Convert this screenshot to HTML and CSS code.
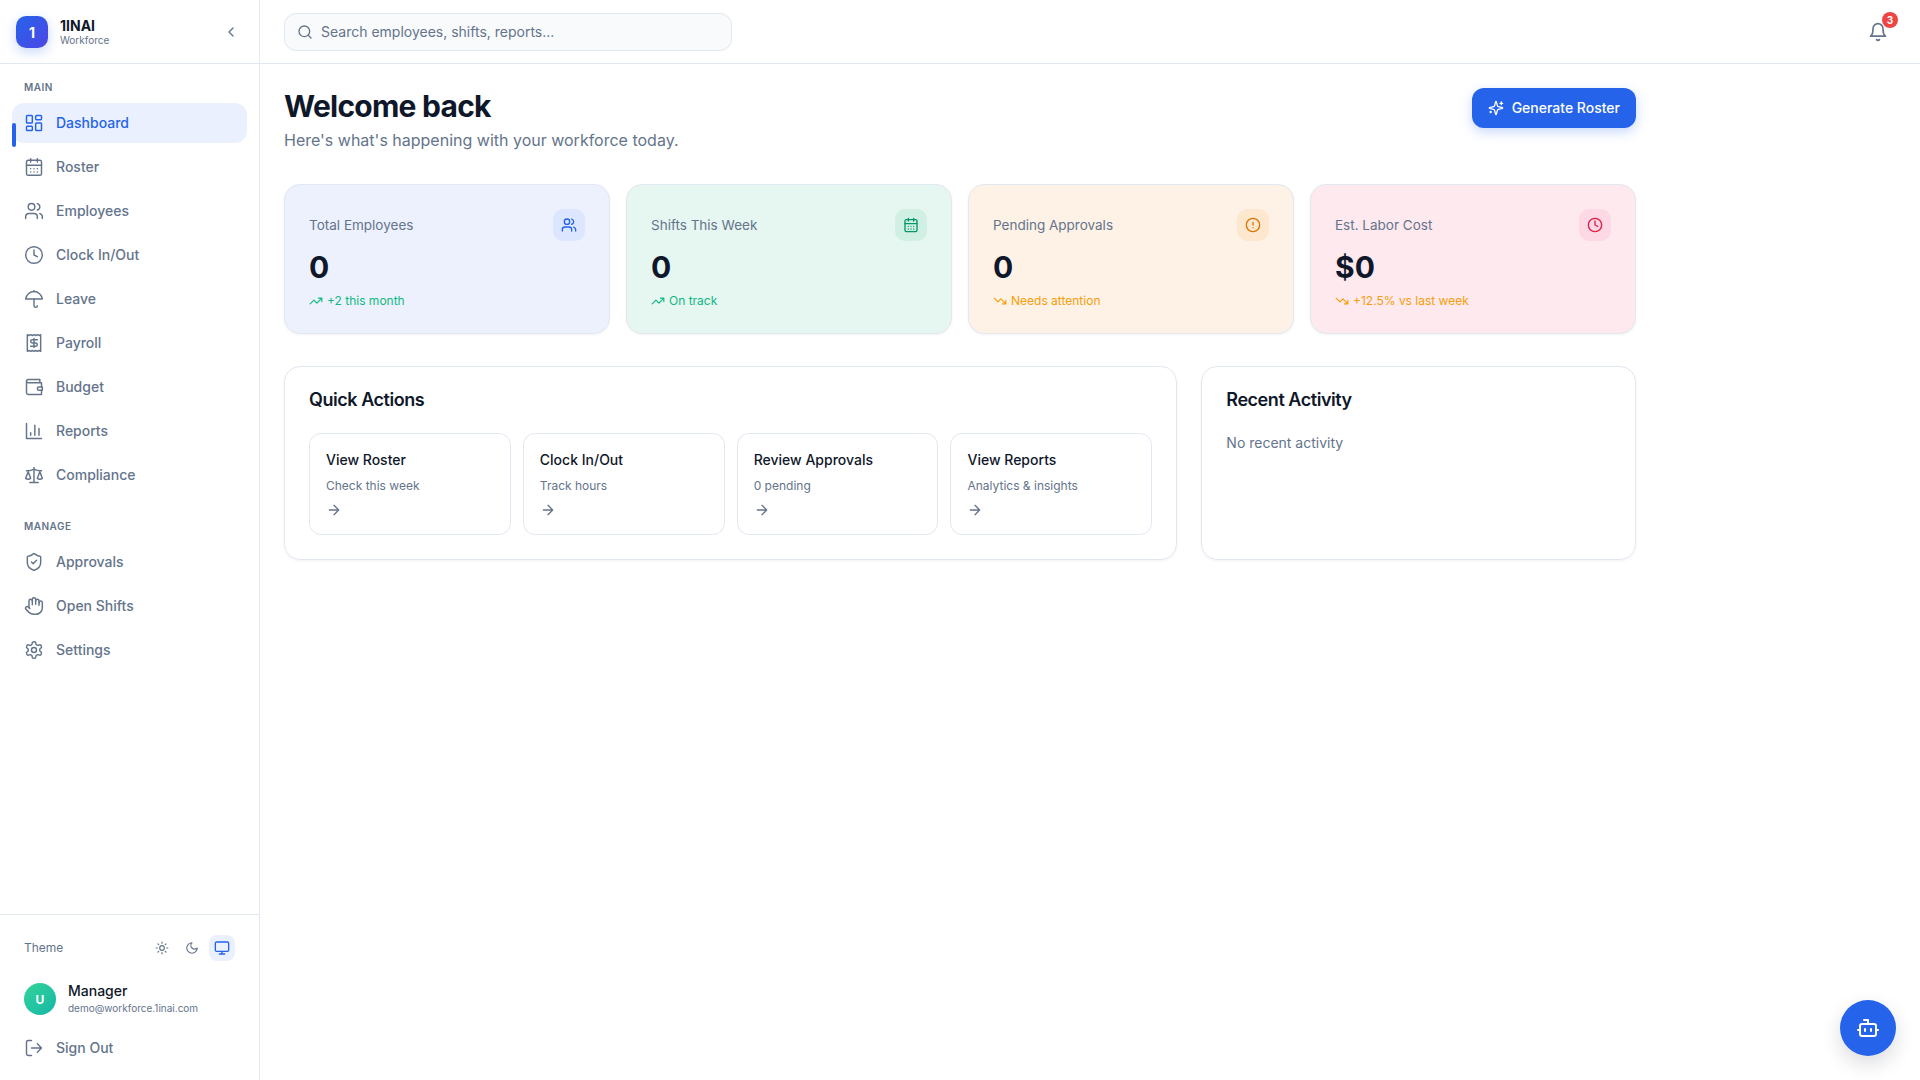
FILE: index.html
```html
<!DOCTYPE html>
<html lang="en">

<head>
    <meta charset="UTF-8">
    <meta name="viewport" content="width=device-width, initial-scale=1.0">
    <title>1INAI Workforce</title>
    <link rel="stylesheet" href="styles.css">
</head>

<body>
    <svg class="icon-sprite" xmlns="http://www.w3.org/2000/svg">
        <symbol id="i-dashboard" viewBox="0 0 24 24"><rect x="3" y="3" width="7" height="9" rx="1"/><rect x="14" y="3" width="7" height="5" rx="1"/><rect x="14" y="12" width="7" height="9" rx="1"/><rect x="3" y="16" width="7" height="5" rx="1"/></symbol>
        <symbol id="i-calendar" viewBox="0 0 24 24"><path d="M8 2v4M16 2v4"/><rect x="3" y="4" width="18" height="18" rx="2"/><path d="M3 10h18M8 14h.01M12 14h.01M16 14h.01M8 18h.01M12 18h.01M16 18h.01"/></symbol>
        <symbol id="i-users" viewBox="0 0 24 24"><path d="M16 21v-2a4 4 0 0 0-4-4H6a4 4 0 0 0-4 4v2"/><circle cx="9" cy="7" r="4"/><path d="M22 21v-2a4 4 0 0 0-3-3.87M16 3.13a4 4 0 0 1 0 7.75"/></symbol>
        <symbol id="i-clock" viewBox="0 0 24 24"><circle cx="12" cy="12" r="10"/><path d="M12 6v6l4 2"/></symbol>
        <symbol id="i-umbrella" viewBox="0 0 24 24"><path d="M22 12a10.06 10.06 1 0 0-20 0Z"/><path d="M12 12v8a2 2 0 0 0 4 0M12 2v1"/></symbol>
        <symbol id="i-receipt" viewBox="0 0 24 24"><path d="M4 2v20l2-1 2 1 2-1 2 1 2-1 2 1 2-1 2 1V2l-2 1-2-1-2 1-2-1-2 1-2-1-2 1Z"/><path d="M16 8h-6a2 2 0 1 0 0 4h4a2 2 0 1 1 0 4H8M12 17.5v-11"/></symbol>
        <symbol id="i-wallet" viewBox="0 0 24 24"><path d="M21 12V7H5a2 2 0 0 1 0-4h14v4"/><path d="M3 5v14a2 2 0 0 0 2 2h16v-5"/><path d="M18 12a2 2 0 0 0 0 4h4v-4Z"/></symbol>
        <symbol id="i-chart" viewBox="0 0 24 24"><path d="M3 3v18h18M18 17V9M13 17V5M8 17v-3"/></symbol>
        <symbol id="i-scale" viewBox="0 0 24 24"><path d="m16 16 3-8 3 8c-.87.65-1.92 1-3 1s-2.13-.35-3-1Z"/><path d="m2 16 3-8 3 8c-.87.65-1.92 1-3 1s-2.13-.35-3-1Z"/><path d="M7 21h10M12 3v18M3 7h2c2 0 5-1 7-2 2 1 5 2 7 2h2"/></symbol>
        <symbol id="i-shield" viewBox="0 0 24 24"><path d="M20 13c0 5-3.5 7.5-7.66 8.95a1 1 0 0 1-.67-.01C7.5 20.5 4 18 4 13V6a1 1 0 0 1 1-1c2 0 4.5-1.2 6.24-2.72a1.17 1.17 0 0 1 1.52 0C14.51 3.81 17 5 19 5a1 1 0 0 1 1 1z"/><path d="m9 12 2 2 4-4"/></symbol>
        <symbol id="i-hand" viewBox="0 0 24 24"><path d="M18 11V6a2 2 0 0 0-2-2a2 2 0 0 0-2 2"/><path d="M14 10V4a2 2 0 0 0-2-2a2 2 0 0 0-2 2v2"/><path d="M10 10.5V6a2 2 0 0 0-2-2a2 2 0 0 0-2 2v8"/><path d="M18 8a2 2 0 1 1 4 0v6a8 8 0 0 1-8 8h-2c-2.8 0-4.5-.86-5.99-2.34l-3.6-3.6a2 2 0 0 1 2.83-2.82L7 15"/></symbol>
        <symbol id="i-settings" viewBox="0 0 24 24"><path d="M12.22 2h-.44a2 2 0 0 0-2 2v.18a2 2 0 0 1-1 1.73l-.43.25a2 2 0 0 1-2 0l-.15-.08a2 2 0 0 0-2.73.73l-.22.38a2 2 0 0 0 .73 2.73l.15.1a2 2 0 0 1 1 1.72v.51a2 2 0 0 1-1 1.74l-.15.09a2 2 0 0 0-.73 2.73l.22.38a2 2 0 0 0 2.73.73l.15-.08a2 2 0 0 1 2 0l.43.25a2 2 0 0 1 1 1.73V20a2 2 0 0 0 2 2h.44a2 2 0 0 0 2-2v-.18a2 2 0 0 1 1-1.73l.43-.25a2 2 0 0 1 2 0l.15.08a2 2 0 0 0 2.73-.73l.22-.39a2 2 0 0 0-.73-2.73l-.15-.08a2 2 0 0 1-1-1.74v-.5a2 2 0 0 1 1-1.74l.15-.09a2 2 0 0 0 .73-2.73l-.22-.38a2 2 0 0 0-2.73-.73l-.15.08a2 2 0 0 1-2 0l-.43-.25a2 2 0 0 1-1-1.73V4a2 2 0 0 0-2-2z"/><circle cx="12" cy="12" r="3"/></symbol>
        <symbol id="i-logout" viewBox="0 0 24 24"><path d="M9 21H5a2 2 0 0 1-2-2V5a2 2 0 0 1 2-2h4M16 17l5-5-5-5M21 12H9"/></symbol>
        <symbol id="i-sun" viewBox="0 0 24 24"><circle cx="12" cy="12" r="4"/><path d="M12 2v2M12 20v2M4.93 4.93l1.41 1.41M17.66 17.66l1.41 1.41M2 12h2M20 12h2M6.34 17.66l-1.41 1.41M19.07 4.93l-1.41 1.41"/></symbol>
        <symbol id="i-moon" viewBox="0 0 24 24"><path d="M12 3a6 6 0 0 0 9 9 9 9 0 1 1-9-9Z"/></symbol>
        <symbol id="i-monitor" viewBox="0 0 24 24"><rect x="2" y="3" width="20" height="14" rx="2"/><path d="M8 21h8M12 17v4"/></symbol>
        <symbol id="i-search" viewBox="0 0 24 24"><circle cx="11" cy="11" r="8"/><path d="m21 21-4.3-4.3"/></symbol>
        <symbol id="i-sparkles" viewBox="0 0 24 24"><path d="M9.937 15.5A2 2 0 0 0 8.5 14.063l-6.135-1.582a.5.5 0 0 1 0-.962L8.5 9.936A2 2 0 0 0 9.937 8.5l1.582-6.135a.5.5 0 0 1 .963 0L14.063 8.5A2 2 0 0 0 15.5 9.937l6.135 1.581a.5.5 0 0 1 0 .964L15.5 14.063a2 2 0 0 0-1.437 1.437l-1.582 6.135a.5.5 0 0 1-.963 0z"/><path d="M20 3v4M22 5h-4M4 17v2M5 18H3"/></symbol>
        <symbol id="i-bot" viewBox="0 0 24 24"><path d="M12 8V4H8"/><rect x="4" y="8" width="16" height="12" rx="2"/><path d="M2 14h2M20 14h2M15 13v2M9 13v2"/></symbol>
        <symbol id="i-bell" viewBox="0 0 24 24"><path d="M6 8a6 6 0 0 1 12 0c0 7 3 9 3 9H3s3-2 3-9"/><path d="M10.3 21a1.94 1.94 0 0 0 3.4 0"/></symbol>
        <symbol id="i-up" viewBox="0 0 24 24"><path d="M22 7l-8.5 8.5-5-5L2 17M16 7h6v6"/></symbol>
        <symbol id="i-down" viewBox="0 0 24 24"><path d="M22 17l-8.5-8.5-5 5L2 7M16 17h6v-6"/></symbol>
        <symbol id="i-alert" viewBox="0 0 24 24"><circle cx="12" cy="12" r="10"/><path d="M12 8v4M12 16h.01"/></symbol>
        <symbol id="i-arrow" viewBox="0 0 24 24"><path d="M5 12h14M12 5l7 7-7 7"/></symbol>
        <symbol id="i-chevron" viewBox="0 0 24 24"><path d="m15 18-6-6 6-6"/></symbol>
    </svg>

    <div class="app">
        <aside class="sidebar">
            <div class="brand">
                <div class="brand-logo">1</div>
                <div class="brand-text">
                    <div class="brand-name">1INAI</div>
                    <div class="brand-sub">Workforce</div>
                </div>
                <button class="collapse-btn"><svg class="icon-16"><use href="#i-chevron"/></svg></button>
            </div>

            <nav class="nav">
                <div class="nav-label">Main</div>
                <a class="nav-item active"><svg class="icon-20"><use href="#i-dashboard"/></svg>Dashboard</a>
                <a class="nav-item"><svg class="icon-20"><use href="#i-calendar"/></svg>Roster</a>
                <a class="nav-item"><svg class="icon-20"><use href="#i-users"/></svg>Employees</a>
                <a class="nav-item"><svg class="icon-20"><use href="#i-clock"/></svg>Clock In/Out</a>
                <a class="nav-item"><svg class="icon-20"><use href="#i-umbrella"/></svg>Leave</a>
                <a class="nav-item"><svg class="icon-20"><use href="#i-receipt"/></svg>Payroll</a>
                <a class="nav-item"><svg class="icon-20"><use href="#i-wallet"/></svg>Budget</a>
                <a class="nav-item"><svg class="icon-20"><use href="#i-chart"/></svg>Reports</a>
                <a class="nav-item"><svg class="icon-20"><use href="#i-scale"/></svg>Compliance</a>

                <div class="nav-label nav-label-second">Manage</div>
                <a class="nav-item"><svg class="icon-20"><use href="#i-shield"/></svg>Approvals</a>
                <a class="nav-item"><svg class="icon-20"><use href="#i-hand"/></svg>Open Shifts</a>
                <a class="nav-item"><svg class="icon-20"><use href="#i-settings"/></svg>Settings</a>
            </nav>

            <div class="sidebar-footer">
                <div class="theme-row">
                    <span class="theme-label">Theme</span>
                    <div class="theme-buttons">
                        <button class="theme-btn"><svg class="icon-14"><use href="#i-sun"/></svg></button>
                        <button class="theme-btn"><svg class="icon-14"><use href="#i-moon"/></svg></button>
                        <button class="theme-btn selected"><svg class="icon-16"><use href="#i-monitor"/></svg></button>
                    </div>
                </div>
                <div class="user-row">
                    <div class="avatar">U</div>
                    <div>
                        <div class="user-name">Manager</div>
                        <div class="user-email">demo@workforce.1inai.com</div>
                    </div>
                </div>
                <a class="nav-item signout"><svg class="icon-20"><use href="#i-logout"/></svg>Sign Out</a>
            </div>
        </aside>

        <div class="main">
            <header class="topbar">
                <label class="search">
                    <svg class="icon-16"><use href="#i-search"/></svg>
                    <input type="text" placeholder="Search employees, shifts, reports...">
                </label>
                <button class="bell">
                    <svg class="icon-20"><use href="#i-bell"/></svg>
                    <span class="bell-badge">3</span>
                </button>
            </header>

            <main class="content">
                <div class="page-head">
                    <div>
                        <h1>Welcome back</h1>
                        <p>Here's what's happening with your workforce today.</p>
                    </div>
                    <button class="primary-btn"><svg class="icon-16"><use href="#i-sparkles"/></svg>Generate Roster</button>
                </div>

                <div class="stats">
                    <div class="stat-card blue">
                        <div class="stat-top">
                            <span class="stat-label">Total Employees</span>
                            <span class="stat-icon"><svg class="icon-16"><use href="#i-users"/></svg></span>
                        </div>
                        <div class="stat-value">0</div>
                        <div class="stat-trend good"><svg class="icon-14"><use href="#i-up"/></svg>+2 this month</div>
                    </div>
                    <div class="stat-card green">
                        <div class="stat-top">
                            <span class="stat-label">Shifts This Week</span>
                            <span class="stat-icon"><svg class="icon-16"><use href="#i-calendar"/></svg></span>
                        </div>
                        <div class="stat-value">0</div>
                        <div class="stat-trend good"><svg class="icon-14"><use href="#i-up"/></svg>On track</div>
                    </div>
                    <div class="stat-card orange">
                        <div class="stat-top">
                            <span class="stat-label">Pending Approvals</span>
                            <span class="stat-icon"><svg class="icon-16"><use href="#i-alert"/></svg></span>
                        </div>
                        <div class="stat-value">0</div>
                        <div class="stat-trend warn"><svg class="icon-14"><use href="#i-down"/></svg>Needs attention</div>
                    </div>
                    <div class="stat-card pink">
                        <div class="stat-top">
                            <span class="stat-label">Est. Labor Cost</span>
                            <span class="stat-icon"><svg class="icon-16"><use href="#i-clock"/></svg></span>
                        </div>
                        <div class="stat-value">$0</div>
                        <div class="stat-trend warn"><svg class="icon-14"><use href="#i-down"/></svg>+12.5% vs last week</div>
                    </div>
                </div>

                <div class="panels">
                    <section class="panel panel-wide">
                        <h3>Quick Actions</h3>
                        <div class="actions">
                            <a class="action">
                                <div class="action-title">View Roster</div>
                                <div class="action-sub">Check this week</div>
                                <svg class="icon-16"><use href="#i-arrow"/></svg>
                            </a>
                            <a class="action">
                                <div class="action-title">Clock In/Out</div>
                                <div class="action-sub">Track hours</div>
                                <svg class="icon-16"><use href="#i-arrow"/></svg>
                            </a>
                            <a class="action">
                                <div class="action-title">Review Approvals</div>
                                <div class="action-sub">0 pending</div>
                                <svg class="icon-16"><use href="#i-arrow"/></svg>
                            </a>
                            <a class="action">
                                <div class="action-title">View Reports</div>
                                <div class="action-sub">Analytics &amp; insights</div>
                                <svg class="icon-16"><use href="#i-arrow"/></svg>
                            </a>
                        </div>
                    </section>
                    <section class="panel">
                        <h3>Recent Activity</h3>
                        <p class="empty">No recent activity</p>
                    </section>
                </div>
            </main>
        </div>
    </div>

    <button class="fab"><svg class="icon-24"><use href="#i-bot"/></svg></button>
</body>

</html>
```

FILE: styles.css
```css
* {
    box-sizing: border-box;
}

body {
    font-family: 'Inter', 'Liberation Sans', sans-serif;
    margin: 0;
    background-color: #fff;
    color: #0f172a;
}

button {
    font-family: inherit;
    border: none;
    background: none;
    padding: 0;
    cursor: pointer;
}

.icon-sprite {
    display: none;
}

.icon-14,
.icon-16,
.icon-20,
.icon-24 {
    flex-shrink: 0;
    fill: none;
    stroke: currentColor;
    stroke-width: 2;
    stroke-linecap: round;
    stroke-linejoin: round;
}

.icon-14 {
    width: 14px;
    height: 14px;
}

.icon-16 {
    width: 16px;
    height: 16px;
}

.icon-20 {
    width: 20px;
    height: 20px;
}

.icon-24 {
    width: 24px;
    height: 24px;
}

.app {
    display: flex;
    height: 100vh;
}

/* sidebar */
.sidebar {
    width: 260px;
    flex-shrink: 0;
    display: flex;
    flex-direction: column;
    border-right: 1px solid #e2e8f0;
}

.brand {
    height: 64px;
    display: flex;
    align-items: center;
    gap: 12px;
    padding: 1px 20px 0 16px;
    border-bottom: 1px solid #e2e8f0;
}

.brand-logo {
    width: 32px;
    height: 32px;
    border-radius: 10px;
    background: linear-gradient(135deg, #2563eb, #4f46e5);
    box-shadow: 0 4px 12px rgba(37, 99, 235, 0.25);
    color: #fff;
    font-size: 14px;
    font-weight: 700;
    display: flex;
    align-items: center;
    justify-content: center;
}

.brand-text {
    flex: 1;
}

.brand-name {
    font-size: 14px;
    font-weight: 700;
    line-height: 17px;
}

.brand-sub {
    font-size: 10px;
    line-height: 13px;
    color: #64748b;
}

.collapse-btn {
    color: #64748b;
    display: flex;
}

.nav {
    flex: 1;
    padding: 16px 12px 0;
    display: flex;
    flex-direction: column;
    gap: 4px;
}

.nav-label {
    font-size: 10px;
    font-weight: 600;
    line-height: 14px;
    letter-spacing: 0.5px;
    text-transform: uppercase;
    color: #64748b;
    padding-left: 12px;
    margin-bottom: 5px;
}

.nav-label-second {
    margin-top: 20px;
}

.nav-item {
    position: relative;
    height: 40px;
    display: flex;
    align-items: center;
    gap: 12px;
    padding: 0 12px;
    border-radius: 12px;
    font-size: 14px;
    font-weight: 500;
    line-height: 20px;
    color: #64748b;
    cursor: pointer;
}

.nav-item .icon-20 {
    stroke-width: 1.75;
}

.nav-item.active {
    background-color: #eaf0fd;
    color: #2563eb;
}

.nav-item.active::before {
    content: '';
    position: absolute;
    left: 0;
    top: 50%;
    width: 4px;
    height: 24px;
    border-radius: 2px;
    background-color: #2563eb;
}

.sidebar-footer {
    border-top: 1px solid #e2e8f0;
    padding: 20px 12px 12px;
}

.theme-row {
    display: flex;
    align-items: center;
    justify-content: space-between;
    padding: 0 12px;
    height: 26px;
}

.theme-label {
    font-size: 12px;
    line-height: 16px;
    color: #64748b;
}

.theme-buttons {
    display: flex;
    gap: 4px;
}

.theme-btn {
    width: 26px;
    height: 26px;
    border-radius: 8px;
    color: #64748b;
    display: flex;
    align-items: center;
    justify-content: center;
}

.theme-btn.selected {
    background-color: #eaf0fd;
    color: #2563eb;
}

.user-row {
    display: flex;
    align-items: center;
    gap: 12px;
    padding: 0 12px;
    margin-top: 22px;
}

.avatar {
    width: 32px;
    height: 32px;
    border-radius: 50%;
    background: linear-gradient(135deg, #34d399, #14b8a6);
    color: #fff;
    font-size: 12px;
    font-weight: 700;
    display: flex;
    align-items: center;
    justify-content: center;
}

.user-name {
    font-size: 14px;
    font-weight: 500;
    line-height: 16px;
}

.user-email {
    font-size: 10px;
    line-height: 14px;
    margin-top: 2px;
    color: #64748b;
}

.signout {
    margin-top: 13px;
}

/* top bar */
.main {
    flex: 1;
    min-width: 0;
    display: flex;
    flex-direction: column;
}

.topbar {
    height: 64px;
    flex-shrink: 0;
    display: flex;
    align-items: center;
    justify-content: space-between;
    padding: 1px 24px 0;
    border-bottom: 1px solid #e2e8f0;
}

.search {
    width: 448px;
    height: 38px;
    display: flex;
    align-items: center;
    gap: 8px;
    padding: 0 12px;
    background-color: #f8fafc;
    border: 1px solid #e2e8f0;
    border-radius: 12px;
    color: #64748b;
}

.search input {
    flex: 1;
    border: none;
    outline: none;
    background: none;
    padding: 0 0 1px;
    font-family: inherit;
    font-size: 14px;
    color: #0f172a;
}

.search input::placeholder {
    color: #64748b;
    opacity: 1;
}

.bell {
    position: relative;
    width: 36px;
    height: 36px;
    color: #64748b;
    display: flex;
    align-items: center;
    justify-content: center;
}

.bell-badge {
    position: absolute;
    top: -2px;
    right: -2px;
    width: 16px;
    height: 16px;
    border-radius: 50%;
    background-color: #ef4444;
    color: #fff;
    font-size: 10px;
    font-weight: 700;
    line-height: 16px;
    text-align: center;
}

/* page */
.content {
    width: 100%;
    max-width: 1400px;
    padding: 24px;
}

.page-head {
    display: flex;
    align-items: flex-start;
    justify-content: space-between;
    margin-bottom: 32px;
}

h1 {
    margin: 0;
    font-size: 30px;
    font-weight: 700;
    line-height: 36px;
    letter-spacing: -0.75px;
}

.page-head p {
    margin: 4px 0 0;
    font-size: 16px;
    line-height: 24px;
    color: #64748b;
}

.primary-btn {
    height: 40px;
    display: flex;
    align-items: center;
    gap: 8px;
    padding: 0 16px;
    border-radius: 12px;
    background-color: #2563eb;
    box-shadow: 0 4px 12px rgba(37, 99, 235, 0.25);
    color: #fff;
    font-size: 14px;
    font-weight: 500;
    line-height: 20px;
}

.stats {
    display: grid;
    grid-template-columns: repeat(4, 1fr);
    gap: 16px;
    margin-bottom: 32px;
}

.stat-card {
    padding: 24px;
    border: 1px solid #e2e8f0;
    border-radius: 16px;
    box-shadow: 0 1px 3px rgba(15, 23, 42, 0.05);
}

.stat-card.blue {
    background-color: #edf1fd;
}

.stat-card.green {
    background-color: #e6f6f1;
}

.stat-card.orange {
    background-color: #fef2e6;
}

.stat-card.pink {
    background-color: #fee9ef;
}

.stat-top {
    display: flex;
    align-items: center;
    justify-content: space-between;
    margin-bottom: 8px;
}

.stat-label {
    font-size: 13.5px;
    color: #64748b;
}

.stat-icon {
    width: 32px;
    height: 32px;
    border-radius: 10px;
    display: flex;
    align-items: center;
    justify-content: center;
}

.blue .stat-icon {
    background-color: #dce6fe;
    color: #2563eb;
}

.green .stat-icon {
    background-color: #d0f0e4;
    color: #059669;
}

.orange .stat-icon {
    background-color: #fde8cf;
    color: #d97706;
}

.pink .stat-icon {
    background-color: #fcd9e4;
    color: #e11d48;
}

.stat-value {
    font-size: 30px;
    font-weight: 700;
    line-height: 36px;
}

.stat-trend {
    display: flex;
    align-items: center;
    gap: 4px;
    margin-top: 8px;
    font-size: 12px;
    line-height: 16px;
}

.stat-trend.good {
    color: #10b981;
}

.stat-trend.warn {
    color: #f59e0b;
}

.panels {
    display: grid;
    grid-template-columns: repeat(3, 1fr);
    gap: 24px;
}

.panel {
    padding: 24px;
    border: 1px solid #e2e8f0;
    border-radius: 16px;
    box-shadow: 0 1px 3px rgba(15, 23, 42, 0.05);
}

.panel-wide {
    grid-column: span 2;
}

h3 {
    margin: 0 0 24px;
    font-size: 18px;
    font-weight: 600;
    line-height: 18px;
    letter-spacing: -0.45px;
}

.actions {
    display: grid;
    grid-template-columns: repeat(4, 1fr);
    gap: 12px;
}

.action {
    display: block;
    padding: 16px;
    border: 1px solid #e2e8f0;
    border-radius: 12px;
    color: #64748b;
}

.action-title {
    font-size: 14px;
    font-weight: 500;
    line-height: 20px;
    color: #0f172a;
}

.action-sub {
    font-size: 12px;
    line-height: 16px;
    margin: 8px 0;
}

.action .icon-16 {
    display: block;
}

.empty {
    margin: 0;
    font-size: 14px;
    line-height: 20px;
    color: #64748b;
}

.fab {
    position: fixed;
    right: 24px;
    bottom: 24px;
    width: 56px;
    height: 56px;
    border-radius: 50%;
    background-color: #2563eb;
    box-shadow: 0 8px 20px rgba(15, 23, 42, 0.15);
    color: #fff;
    display: flex;
    align-items: center;
    justify-content: center;
}
```
